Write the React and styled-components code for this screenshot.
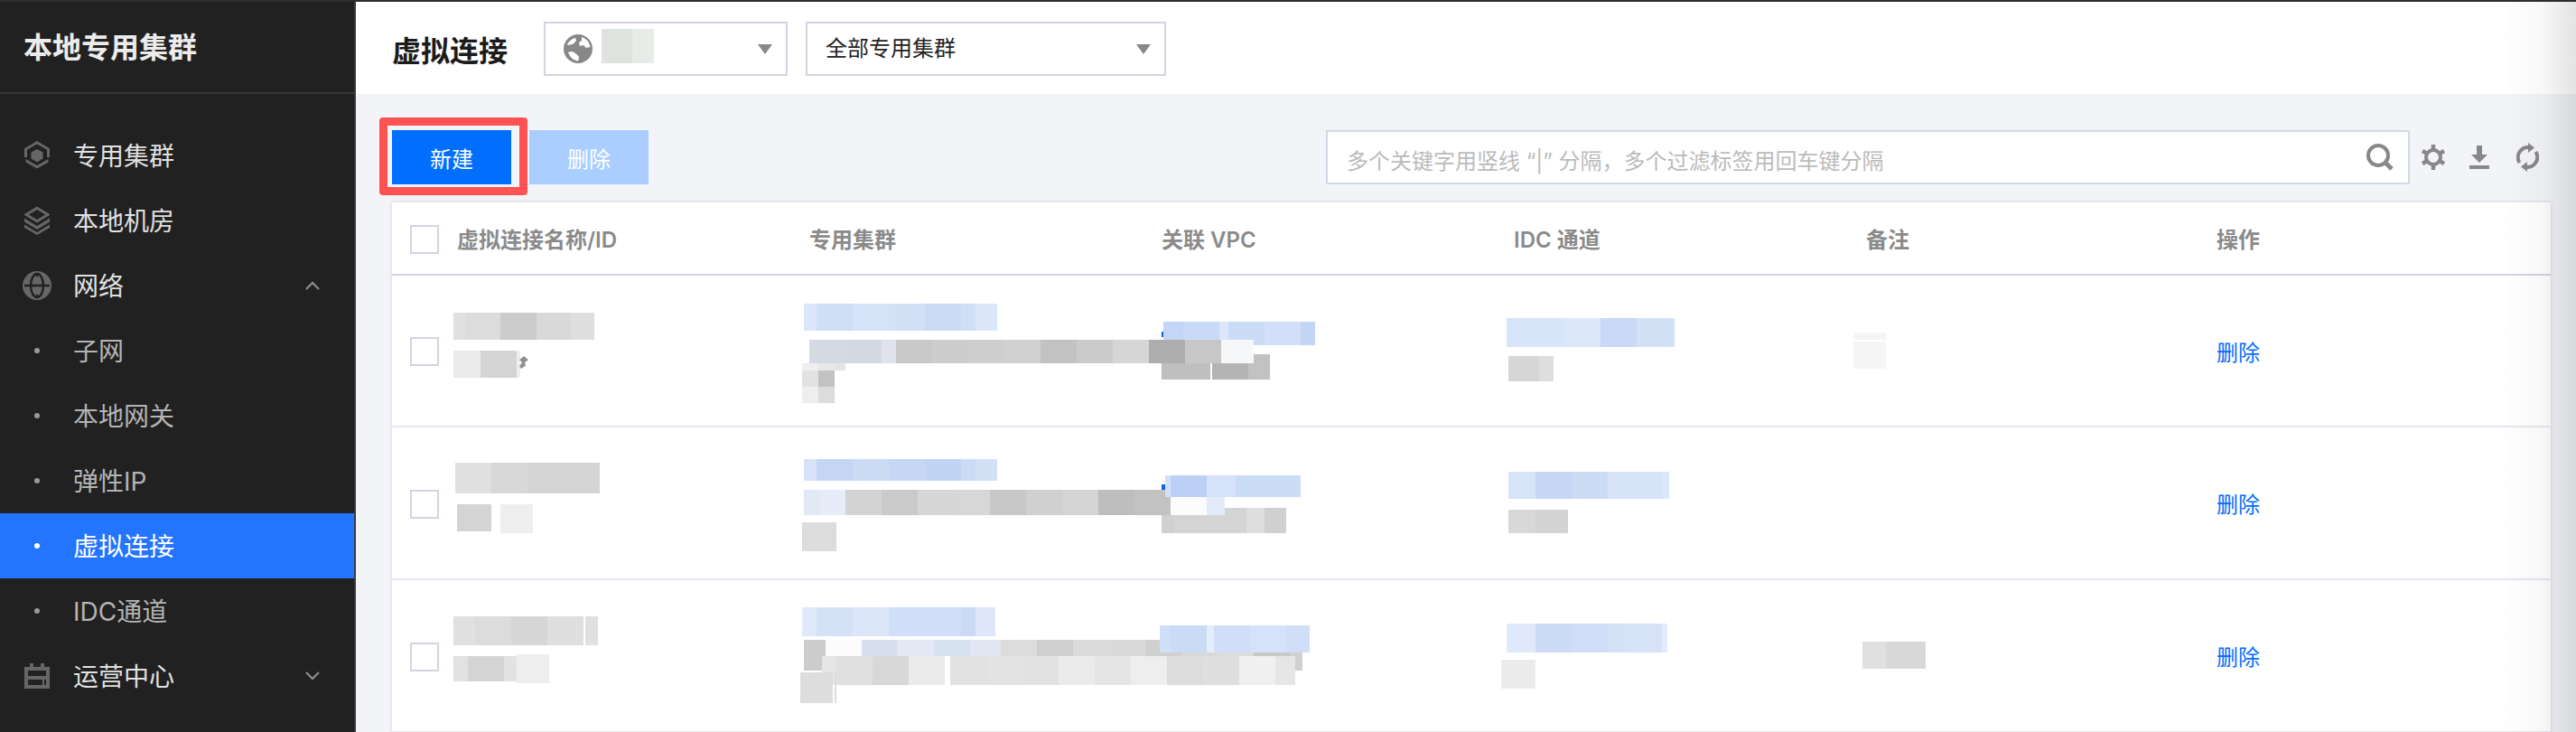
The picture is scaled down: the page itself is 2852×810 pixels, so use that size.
import React from 'react';
import styled, { createGlobalStyle } from 'styled-components';

const Global = createGlobalStyle`
  html, body { margin: 0; padding: 0; background: #f2f4f8; }
  body { font-family: Inter, "Noto Sans CJK SC", "Noto Sans", sans-serif; }
  * { box-sizing: border-box; }
`;

const Page = styled.div`
  position: relative;
  display: flex;
  width: 2852px;
  height: 810px;
  overflow: hidden;
  border-top: 2px solid #2d2d2d;
`;
const EdgeShade = styled.div`
  position: absolute;
  top: 0;
  right: 0;
  bottom: 0;
  width: 82px;
  pointer-events: none;
  background: linear-gradient(to right, rgba(0,0,0,0), rgba(0,0,0,.03) 55%, rgba(0,0,0,.11));
`;

/* ---------- sidebar ---------- */
const Sidebar = styled.aside`
  flex: none;
  width: 394px;
  background: #212121;
  border-right: 2px solid #3a3a3a;
`;
const Brand = styled.div`
  height: 102px;
  display: flex;
  align-items: center;
  padding-left: 26px;
  padding-bottom: 4px;
  border-bottom: 2px solid #363636;
  color: #ececec;
  font-size: 32px;
  font-weight: 700;
`;
const Nav = styled.nav`
  padding-top: 32px;
`;
const NavRow = styled.div`
  height: 72px;
  display: flex;
  align-items: center;
  color: ${p => (p.$active ? '#fff' : p.$sub ? '#b4b4b4' : '#e0e0e0')};
  background: ${p => (p.$active ? '#2375ff' : 'transparent')};
  font-size: 28px;
`;
const NavIcon = styled.span`
  width: 81px;
  flex: none;
  display: flex;
  justify-content: center;
  padding-left: 1px;
  svg { display: block; margin-left: -1px; }
`;
const NavDot = styled.span`
  width: 81px;
  flex: none;
  display: flex;
  padding-left: 38px;
  &::before {
    content: '';
    width: 6px;
    height: 6px;
    border-radius: 50%;
    background: ${p => (p.$active ? '#fff' : '#9a9a9a')};
  }
`;
const NavLabel = styled.span`
  flex: 1;
  margin-bottom: 2px;
`;
const Chevron = styled.svg`
  flex: none;
  margin-right: 38px;
`;

/* ---------- main ---------- */
const Main = styled.main`
  flex: 1;
  min-width: 0;
  background: #f2f4f8;
`;
const Header = styled.header`
  height: 102px;
  background: #fff;
  display: flex;
  align-items: center;
  padding-left: 40px;
  padding-top: 2px;
`;
const PageTitle = styled.h1`
  margin: 0 40px 0 0;
  width: 128px;
  font-size: 32px;
  font-weight: 700;
  color: #1c1c1c;
  white-space: nowrap;
`;
const Select = styled.div`
  position: relative;
  width: ${p => p.$w}px;
  height: 60px;
  margin-right: 20px;
  border: 2px solid #d1d5e0;
  background: #fff;
  display: flex;
  align-items: center;
  padding-left: ${p => p.$pad}px;
  font-size: 24px;
  color: #222;
  gap: 10px;
`;
const SelectText = styled.span`
  margin-bottom: 5px;
`;
const Caret = styled.span`
  position: absolute;
  right: 15px;
  top: 23px;
  width: 0;
  height: 0;
  border-left: 8px solid transparent;
  border-right: 8px solid transparent;
  border-top: 11px solid #888;
`;
const RegionBlur = styled.span`
  width: 58px;
  height: 38px;
  margin-top: -6px;
  background: linear-gradient(to right, #dfe3e0 34px, #e8ece9 34px);
`;
const Toolbar = styled.div`
  display: flex;
  align-items: center;
  height: 60px;
  margin-top: 40px;
  padding: 0 41px 0 40px;
`;
const ButtonSlot = styled.span`
  position: relative;
  display: flex;
`;
const Button = styled.button`
  width: 132px;
  height: 60px;
  padding: 0;
  margin: 0 ${p => (p.$last ? 0 : 20)}px 0 0;
  border: 0;
  color: #fff;
  font: inherit;
  font-size: 24px;
  background: ${p => (p.$disabled ? '#aaceff' : '#006eff')};
`;
const Highlight = styled.span`
  position: absolute;
  left: -14px;
  top: -14px;
  width: 164px;
  height: 86px;
  border: 9px solid #ff5252;
  border-radius: 4px;
  pointer-events: none;
`;
const Search = styled.div`
  width: 1200px;
  height: 60px;
  margin-left: auto;
  border: 2px solid #d1d9e4;
  background: #fff;
  display: flex;
  align-items: center;
  padding: 0 16px 0 21px;
`;
const SearchInput = styled.input`
  flex: 1;
  border: 0;
  outline: 0;
  padding: 8px 0 0;
  font: inherit;
  font-size: 24px;
  color: #333;
  background: transparent;
  &::placeholder { color: #bbb; opacity: 1; }
`;
const ToolIcon = styled.svg`
  flex: none;
  display: block;
  margin-left: ${p => p.$gap}px;
`;

/* ---------- table ---------- */
const Card = styled.section`
  margin: 20px 28px 0 40px;
  background: #fff;
  box-shadow: 0 0 4px rgba(54, 58, 80, .18);
`;
const Cols = `
  display: grid;
  grid-template-columns: 72px repeat(4, 390px) 388px 1fr;
  align-items: center;
`;
const HeadRow = styled.div`
  ${Cols}
  height: 81px;
  border-bottom: 2px solid #d1d5e0;
  color: #8a8a8a;
  font-size: 24px;
  font-weight: 600;
`;
const Row = styled.div`
  ${Cols}
  position: relative;
  height: ${p => p.$h}px;
  border-bottom: 2px solid #e6e8ef;
`;
const Check = styled.span`
  display: block;
  width: 32px;
  height: 32px;
  margin: 2px 0 0 20px;
  border: 2px solid #d1d5e0;
  background: #fff;
`;
const DeleteLink = styled.a`
  grid-column: 7;
  color: #006eff;
  font-size: 24px;
`;
const Patch = styled.div`
  position: absolute;
  display: flex;
  pointer-events: none;
  ${p => p.$diamond && 'clip-path: polygon(50% 0, 100% 30%, 60% 50%, 70% 75%, 20% 100%, 0 80%, 30% 50%, 0 30%);'}
`;
const Tile = styled.span`
  flex: none;
  height: 100%;
  background: ${p => p.$c};
`;

const Mosaic = ({ spec, rowTop }) => {
  const [x0, y0, y1, stops, diamond] = spec;
  let prev = x0;
  return (
    <Patch $diamond={diamond} style={{ left: x0 - 434, top: y0 - rowTop, height: y1 - y0, width: stops[stops.length - 1][0] - x0 }}>
      {stops.map(([x, c], i) => {
        const w = x - prev;
        prev = x;
        return <Tile key={i} $c={c} style={{ width: w }} />;
      })}
    </Patch>
  );
};

const T = 'transparent';
const rows = [
  {
    top: 305, h: 168,
    patches: [
      [502, 346, 376, [[515, '#e0e0e0'], [554, '#dcdcdc'], [594, '#cccccc'], [632, '#d9d9d9'], [658, '#dedede']]],
      [502, 388, 418, [[532, '#ebebeb'], [572, '#d4d4d4'], [576, '#eeeeee']]],
      [575, 394, 408, [[585, '#8f8f8f']], true],
      [890, 336, 366, [[904, '#dbe6f8'], [944, '#cfdff6'], [984, '#d6e3f8'], [1024, '#d3e1f7'], [1064, '#ccdcf5'], [1080, '#cfdff6'], [1104, '#dbe6f8']]],
      [1286, 367, 373, [[1288, '#1464e0']]],
      [1288, 356, 382, [[1310, '#c4d6f6'], [1350, '#c9daf6'], [1360, '#dde7fa'], [1400, '#cbdcf7'], [1440, '#d1dff8'], [1456, '#c3d5f5']]],
      [1286, 392, 420, [[1340, '#bfbfbf'], [1342, T], [1382, '#b4b4b4'], [1406, '#c2c2c2']]],
      [896, 376, 402, [[936, '#d5d9e3'], [976, '#d3d8e2'], [992, '#e0e3ec'], [1032, '#c9c9c9'], [1072, '#cdcdcd'], [1112, '#cecece'], [1152, '#d1d1d1'], [1192, '#c2c2c2'], [1232, '#cbcbcb'], [1272, '#d6d6d6'], [1312, '#adadad'], [1352, '#c7c7c7'], [1388, '#f6f7f9']]],
      [888, 402, 410, [[906, '#eeeeee'], [924, '#e8e8e8'], [936, '#e4e4e4']]],
      [888, 410, 428, [[906, '#e2e2e2'], [924, '#c2c2c2']]],
      [888, 428, 446, [[906, '#eeeeee'], [924, '#dcdcdc']]],
      [1668, 352, 384, [[1732, '#d8e4f9'], [1772, '#dce7f9'], [1812, '#c8d8f5'], [1854, '#d3e1f7']]],
      [1670, 394, 422, [[1704, '#d6d6d6'], [1720, '#dedede']]],
      [2052, 368, 376, [[2088, '#f5f5f5']]],
      [2052, 378, 408, [[2088, '#f5f5f5']]],
    ],
  },
  {
    top: 473, h: 169,
    patches: [
      [504, 512, 546, [[544, '#e0e0e0'], [584, '#d8d8d8'], [664, '#d4d4d4']]],
      [506, 558, 588, [[544, '#d4d4d4']]],
      [554, 558, 590, [[590, '#eeeeee']]],
      [890, 508, 532, [[904, '#d5e2f7'], [944, '#c5d6f4'], [984, '#cddcf5'], [1024, '#c6d7f4'], [1064, '#c1d4f3'], [1080, '#cbdbf5'], [1104, '#d3e1f7']]],
      [1286, 562, 590, [[1300, '#d0d0d0'], [1380, '#d4d4d4'], [1400, '#dedede'], [1424, '#d0d0d0']]],
      [1286, 536, 543, [[1290, '#1464e0']]],
      [890, 542, 570, [[908, '#e1e9f7'], [936, '#e6edf8'], [976, '#d3d3d3'], [1016, '#cacaca'], [1056, '#d6d6d6'], [1096, '#d7d7d7'], [1136, '#c8c8c8'], [1176, '#d0d0d0'], [1216, '#d4d4d4'], [1256, '#bebebe'], [1296, '#c2c2c2'], [1336, '#fcfcfc'], [1356, '#e3eaf8']]],
      [1290, 526, 550, [[1296, '#d3e0f7'], [1336, '#bcd0f5'], [1368, '#d5e2fa'], [1440, '#cbdcf6']]],
      [888, 578, 610, [[926, '#dcdcdc']]],
      [1670, 522, 552, [[1700, '#d8e4f7'], [1740, '#c6d7f5'], [1780, '#cddcf5'], [1840, '#d7e3f8'], [1848, '#dbe6f8']]],
      [1670, 564, 590, [[1700, '#d8d8d8'], [1736, '#d3d3d3']]],
    ],
  },
  {
    top: 642, h: 169,
    patches: [
      [502, 682, 714, [[526, '#e0e0e0'], [566, '#dcdcdc'], [606, '#d6d6d6'], [646, '#dfdfdf'], [648, T], [662, '#e0e0e0']]],
      [502, 726, 754, [[518, '#e2e2e2'], [558, '#d4d4d4'], [572, '#e2e2e2']]],
      [572, 724, 756, [[608, '#eeeeee']]],
      [888, 672, 704, [[904, '#dfe9f9'], [944, '#d4e2f7'], [984, '#dbe6f8'], [1064, '#d0dff7'], [1080, '#cadaf5'], [1102, '#dde7f9']]],
      [890, 708, 742, [[914, '#cccccc'], [954, '#fbfbfb'], [994, '#d7e0ee'], [1034, '#e3e8f4'], [1074, '#d7e2f1'], [1108, '#e1e8f4'], [1148, '#dcdcdc'], [1188, '#cfcfcf'], [1228, '#dbdbdb'], [1268, '#dadada'], [1308, '#d0d0d0'], [1348, '#d8d8d8'], [1388, '#dcdcdc'], [1428, '#c8c8c8'], [1442, '#d0d0d0']]],
      [1284, 692, 722, [[1296, '#d0dff8'], [1336, '#cadbf5'], [1344, '#e4edfb'], [1384, '#d0dff7'], [1424, '#d6e2f9'], [1450, '#d0def8']]],
      [910, 726, 758, [[926, '#e6e6e6'], [966, '#e0e0e0'], [1006, '#d8d8d8'], [1046, '#ebebeb'], [1052, '#ffffff'], [1092, '#e1e1e1'], [1132, '#e3e3e3'], [1172, '#e1e1e1'], [1212, '#ebebeb'], [1252, '#e5e5e5'], [1292, '#eeeeee'], [1332, '#dcdcdc'], [1372, '#dfdfdf'], [1412, '#f0f0f0'], [1434, '#e6e6e6']]],
      [886, 744, 778, [[922, '#dddddd'], [924, T], [926, '#dddddd']]],
      [1668, 690, 722, [[1700, '#e0e9f9'], [1740, '#ccdcf6'], [1780, '#d0def7'], [1800, '#d4e1f7'], [1840, '#d6e2f8'], [1846, '#e3ebfa']]],
      [1662, 730, 762, [[1700, '#ebebeb']]],
      [2062, 710, 740, [[2088, '#e0e0e0'], [2132, '#d8d8d8']]],
    ],
  },
];

const HexIcon = () => (
  <svg width="28" height="32" viewBox="0 0 28 32">
    <path d="M1.5 18V9L14 1.8 26.5 9v9" fill="none" stroke="#666" strokeWidth="3" />
    <path d="M1.5 20v3.5L14 30.5l12.5-7V20L14 27z" fill="#666" />
    <path d="M14 9l6.5 3.6v7L14 23.4l-6.5-3.8v-7z" fill="#666" />
  </svg>
);
const LayersIcon = () => (
  <svg width="28" height="32" viewBox="0 0 28 32">
    <path d="M14 2.2L26 9.5 14 16.8 2 9.5z" fill="none" stroke="#666" strokeWidth="3" />
    <path d="M0 13.5l14 8.5 14-8.5v4L14 26 0 17.5z" fill="#666" />
    <path d="M0 20.5L14 29l14-8.5V24l-14 8-14-8z" fill="#666" />
  </svg>
);
const GlobeIcon = () => (
  <svg width="32" height="32" viewBox="0 0 32 32">
    <circle cx="16" cy="16" r="16" fill="#666" />
    <g fill="none" stroke="#212121" strokeWidth="2.4">
      <ellipse cx="16" cy="16" rx="7" ry="13" />
      <path d="M2 16h28M16 2v4M16 26v4" />
    </g>
  </svg>
);
const OpsIcon = () => (
  <svg width="28" height="28" viewBox="0 0 28 28">
    <path fillRule="evenodd" fill="#666" d="M0 4h6V0h4v4h8V0h4v4h6v24H0zM4 8v6h20V8zM4 18v6h16v-6zM22 18v6h2v-6z" />
  </svg>
);
const ChevronIcon = ({ up }) => (
  <Chevron width="16" height="10" viewBox="0 0 16 10">
    <path d={up ? 'M1 9l7-7 7 7' : 'M1 1l7 7 7-7'} fill="none" stroke="#888" strokeWidth="2.4" />
  </Chevron>
);
const EarthIcon = () => (
  <svg width="32" height="32" viewBox="0 0 32 32" style={{ flex: 'none' }}>
    <circle cx="16" cy="16" r="16" fill="#888" />
    <path d="M20 3c5 1.500 9 6 9.500 11l-4.500 1-3-3-4 1-1-4 3-2zM5 20c3-2 6-1 8 1s4 2 4 5-2 4-3 3c-4-1-7-4-9-9zM13 4l1 3-4 4-6 1C5 8 9 5 13 4z" fill="#fff" />
  </svg>
);

const nav = [
  { label: '专用集群', icon: <HexIcon /> },
  { label: '本地机房', icon: <LayersIcon /> },
  { label: '网络', icon: <GlobeIcon />, chevron: 'up' },
  { label: '子网', sub: true },
  { label: '本地网关', sub: true },
  { label: '弹性IP', sub: true },
  { label: '虚拟连接', sub: true, active: true },
  { label: 'IDC通道', sub: true },
  { label: '运营中心', icon: <OpsIcon />, chevron: 'down' },
];

export default function App() {
  return (
    <>
      <Global />
      <Page>
        <Sidebar>
          <Brand>本地专用集群</Brand>
          <Nav>
            {nav.map(n => (
              <NavRow key={n.label} $sub={n.sub} $active={n.active}>
                {n.sub ? <NavDot $active={n.active} /> : <NavIcon>{n.icon}</NavIcon>}
                <NavLabel>{n.label}</NavLabel>
                {n.chevron && <ChevronIcon up={n.chevron === 'up'} />}
              </NavRow>
            ))}
          </Nav>
        </Sidebar>
        <Main>
          <Header>
            <PageTitle>虚拟连接</PageTitle>
            <Select $w={270} $pad={20}>
              <EarthIcon />
              <RegionBlur />
              <Caret />
            </Select>
            <Select $w={399} $pad={20}>
              <SelectText>全部专用集群</SelectText>
              <Caret />
            </Select>
          </Header>
          <Toolbar>
            <ButtonSlot>
              <Button>新建</Button>
              <Highlight />
            </ButtonSlot>
            <Button $disabled $last>删除</Button>
            <Search>
              <SearchInput placeholder="多个关键字用竖线 “|” 分隔，多个过滤标签用回车键分隔" readOnly />
              <ToolIcon width="30" height="30" viewBox="0 0 30 30">
                <circle cx="13" cy="13" r="11" fill="none" stroke="#888" strokeWidth="4" />
                <path d="M20.500 20.500L28 28" stroke="#888" strokeWidth="5" />
              </ToolIcon>
            </Search>
            <ToolIcon $gap={13} width="26" height="28" viewBox="0 0 26 28">
              <path d="M13 0v28M1 7l24 14M25 7L1 21" stroke="#888" strokeWidth="4.500" />
              <circle cx="13" cy="14" r="8" fill="#f2f4f8" stroke="#888" strokeWidth="4" />
            </ToolIcon>
            <ToolIcon $gap={27} width="22" height="26" viewBox="0 0 22 26">
              <path d="M8 0h6v10h6l-9 9-9-9h6zM0 22h22v4H0z" fill="#888" />
            </ToolIcon>
            <ToolIcon $gap={30} width="25" height="32" viewBox="0 0 25 32">
              <path d="M3.500 22A11 11 0 0 1 14 5.200M21.500 10A11 11 0 0 1 11 26.800" fill="none" stroke="#888" strokeWidth="4" />
              <path d="M13 0l7 5.500-7 5.500zM12 32l-7-5.500 7-5.500z" fill="#888" />
            </ToolIcon>
          </Toolbar>
          <Card>
            <HeadRow>
              <Check />
              <span>虚拟连接名称/ID</span>
              <span>专用集群</span>
              <span>关联 VPC</span>
              <span>IDC 通道</span>
              <span>备注</span>
              <span>操作</span>
            </HeadRow>
            {rows.map(r => (
              <Row key={r.top} $h={r.h}>
                <Check />
                <DeleteLink>删除</DeleteLink>
                {r.patches.map((s, i) => (
                  <Mosaic key={i} spec={s} rowTop={r.top} />
                ))}
              </Row>
            ))}
          </Card>
        </Main>
        <EdgeShade />
      </Page>
    </>
  );
}
